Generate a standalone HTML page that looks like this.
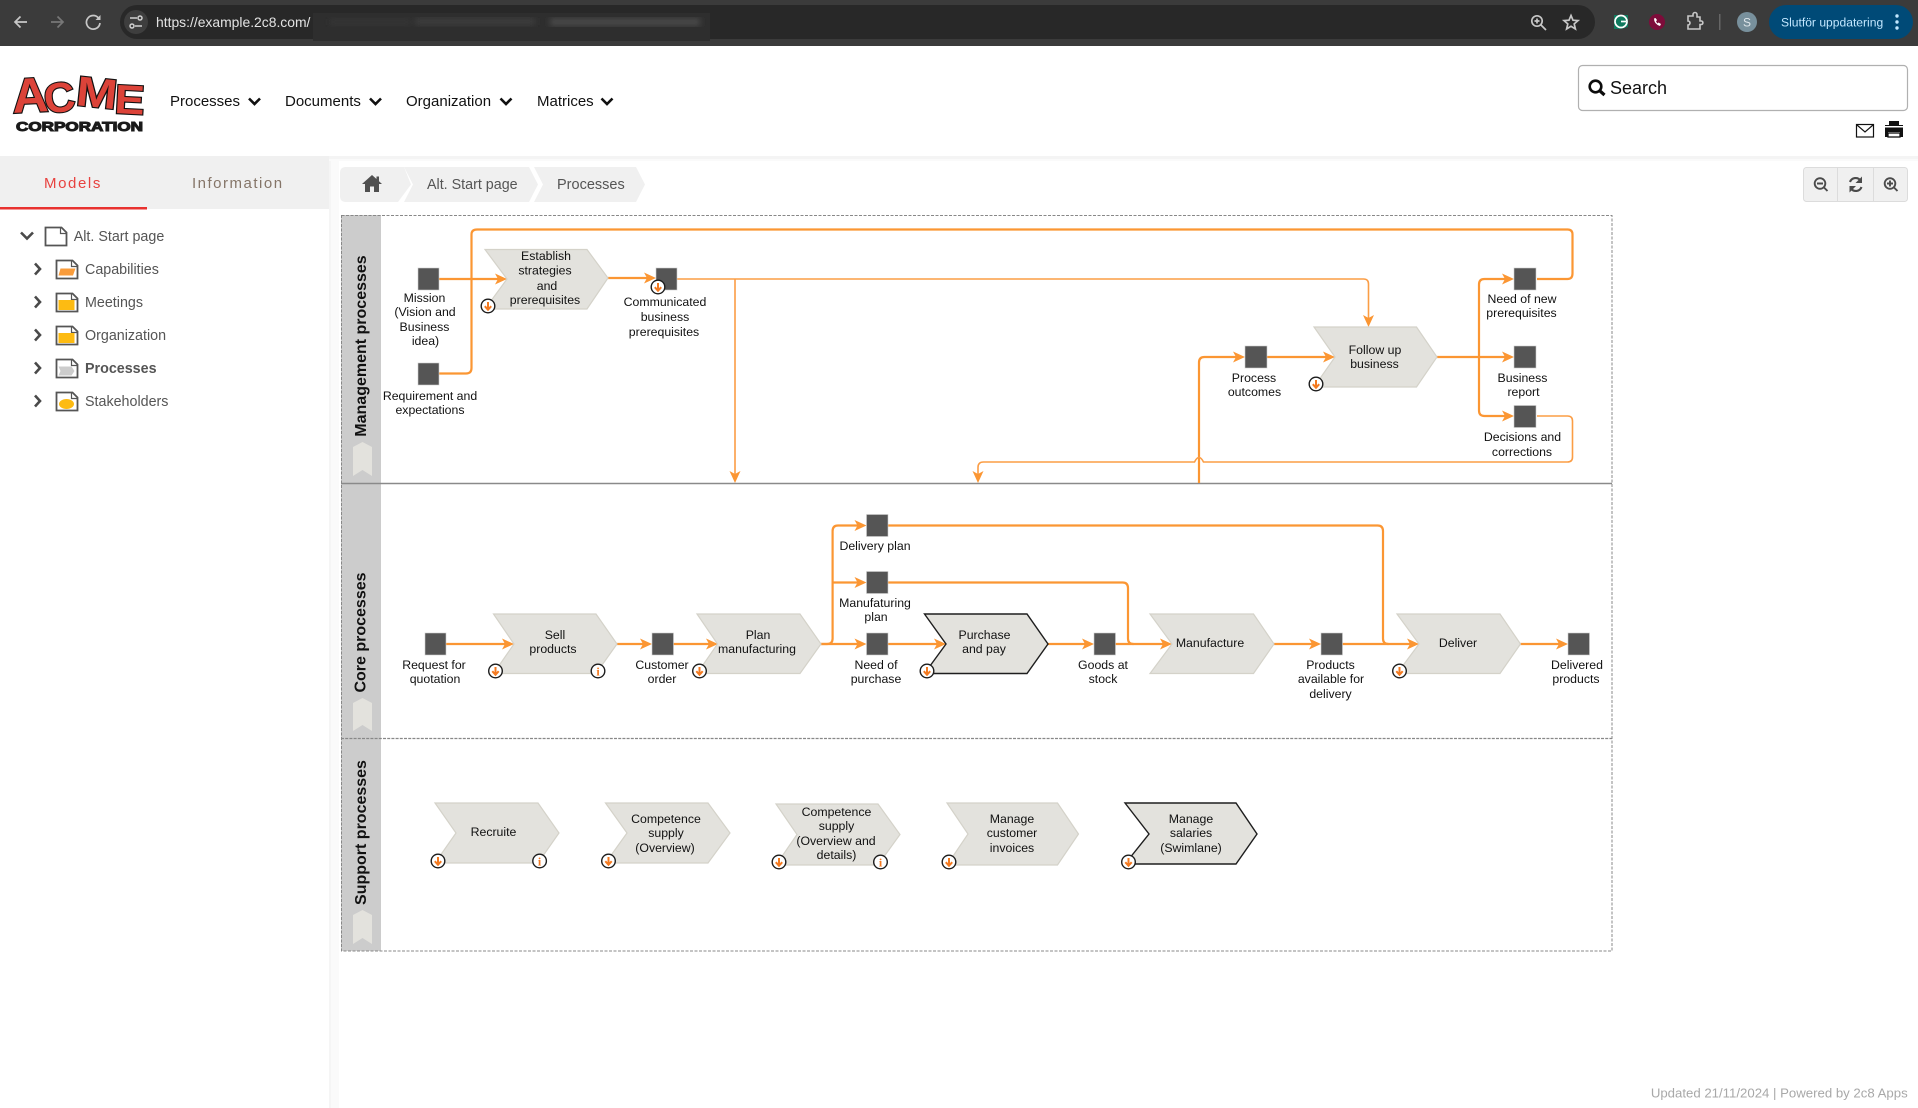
<!DOCTYPE html>
<html><head><meta charset="utf-8"><title>Processes</title>
<style>
html,body{margin:0;padding:0;background:#fff;width:1918px;height:1108px;overflow:hidden}
svg{display:block;font-family:"Liberation Sans",sans-serif}
.l text,.l{font-size:12.3px;fill:#111;text-anchor:middle}
.o{fill:none;stroke:#fb9633;stroke-width:2.2}
.t{fill:none;stroke:#fb9d45;stroke-width:1.6}
.c{fill:#e3e2dd;stroke:#d4d2c9;stroke-width:1.2}
.k{fill:#e3e2dd;stroke:#1e1e1e;stroke-width:1.4}
.b{fill:#555;stroke:#ccc;stroke-width:.6}
.nav{font-size:15px;fill:#111}
.tree{font-size:14.3px;fill:#555}
</style></head><body>
<svg width="1918" height="1108" viewBox="0 0 1918 1108" xmlns="http://www.w3.org/2000/svg">
<defs>
<path id="ar" d="M0 0L-12-5.500L-9 0L-12 5.500Z" fill="#fb9633"/>
<path id="ad" d="M0 0L-5.500-12L0-9L5.500-12Z" fill="#fb9633"/>
<g id="cd"><circle r="6.800" fill="#fff" stroke="#1c1c1c" stroke-width="1.400"/><path d="M0-4V2.500M-3.200 .2L0 3.800L3.200 .2" fill="none" stroke="#f47a20" stroke-width="2"/></g>
<circle id="ci" r="6.800" fill="#fff" stroke="#1c1c1c" stroke-width="1.400"/>
<path id="doc" d="M1 1H17L22 6V19H1Z" fill="#fff" stroke="#555" stroke-width="1.800"/>
<path id="fold" d="M16 1V7H22" fill="none" stroke="#555" stroke-width="1.200"/>
<path id="cr" d="M0 0L5 5.500L0 11" fill="none" stroke="#4a4a4a" stroke-width="2.600"/>
<filter id="bl"><feGaussianBlur stdDeviation="3"/></filter>
</defs>

<!-- browser chrome -->
<rect x="0" y="0" width="1918" height="46" fill="#3b3b3b"/>
<g fill="none" stroke="#c7c7c7" stroke-width="1.700">
<path d="M27 22H15M20.500 16.500L15 22L20.500 27.500"/>
<path d="M51 22H63M57.500 16.500L63 22L57.500 27.500" stroke="#777"/>
<path d="M98.500 18A6.800 6.800 0 1 0 100 23"/>
</g>
<path d="M100.500 15V20H95.500Z" fill="#c7c7c7"/>
<rect x="120" y="5" width="1475" height="34" rx="17" fill="#282828"/>
<circle cx="136" cy="22" r="12" fill="#3e3e3e"/>
<g fill="none" stroke="#d0d0d0" stroke-width="1.500"><path d="M130 18H137M135 26H142"/><circle cx="140" cy="18" r="2"/><circle cx="132" cy="26" r="2"/></g>
<text x="156" y="27" font-size="13.900" fill="#e3e3e3">https://example.2c8.com/</text>
<rect x="313" y="13" width="397" height="28" fill="#2e2e2e"/>
<g filter="url(#bl)"><rect x="330" y="19" width="80" height="6" fill="#343434"/><rect x="415" y="18" width="120" height="7" fill="#3e3e3e"/><rect x="550" y="18" width="150" height="8" fill="#484848"/></g>
<g fill="none" stroke="#c7c7c7" stroke-width="1.700">
<circle cx="1537" cy="21" r="5.200"/><path d="M1541 25L1546 30M1534.500 21H1539.500M1537 18.500V23.500"/>
<path d="M1571 15.500L1573 20.200L1578 20.600L1574.200 23.900L1575.400 29L1571 26.300L1566.600 29L1567.800 23.900L1564 20.600L1569 20.200Z"/>
<path d="M1688 16H1693V14.500A2 2 0 0 1 1697 14.500V17H1700V21H1701.500A1.800 1.800 0 0 1 1701.500 24.500H1700V29H1688V25A2 2 0 0 0 1688 21Z" stroke-width="1.600"/>
</g>
<path d="M1614 15H1628V27L1621 29H1614Z" fill="#0f7a5e"/>
<circle cx="1621" cy="21.500" r="6" fill="none" stroke="#fff" stroke-width="1.700"/><path d="M1621 21.500H1626" stroke="#fff" stroke-width="1.700"/>
<circle cx="1657" cy="22" r="8" fill="#7d0c3a"/><path d="M1654 18.500Q1654 24 1660 26L1661 24L1658.500 22.500L1657.500 23.500L1656 21.500L1657 20L1655.500 18Z" fill="#fff"/>
<rect x="1719" y="14" width="1.500" height="16" fill="#666"/>
<circle cx="1747" cy="22" r="10" fill="#78909c"/>
<text x="1747" y="26.500" font-size="12" fill="#dfe6ea" text-anchor="middle">S</text>
<rect x="1769" y="5" width="144" height="34" rx="17" fill="#004a77"/>
<text x="1781" y="26.500" font-size="12.100" fill="#c2e7ff">Slutför uppdatering</text>
<g fill="#c2e7ff"><circle cx="1897" cy="16" r="1.700"/><circle cx="1897" cy="22" r="1.700"/><circle cx="1897" cy="28" r="1.700"/></g>

<!-- page shadows -->
<rect x="329" y="156" width="10" height="952" fill="#fafafa"/>
<rect x="329" y="156" width="2" height="952" fill="#f5f5f5"/>
<rect x="0" y="156" width="1918" height="3" fill="#f4f4f4"/>
<rect x="0" y="159" width="1918" height="2" fill="#fafafa"/>

<!-- logo -->
<g font-weight="bold" fill="#dc4339" stroke="#111" stroke-width="2.200" paint-order="stroke" font-family="Liberation Sans, sans-serif">
<text transform="translate(13 113) rotate(-3)" font-size="49" textLength="36" lengthAdjust="spacingAndGlyphs">A</text>
<text transform="translate(46 114) rotate(-8)" font-size="42" textLength="31" lengthAdjust="spacingAndGlyphs">C</text>
<text transform="translate(75 105) rotate(6)" font-size="42" textLength="41" lengthAdjust="spacingAndGlyphs">M</text>
<text transform="translate(114 113) rotate(3)" font-size="41" textLength="30" lengthAdjust="spacingAndGlyphs">E</text>
</g>
<text x="16" y="131" font-size="12.500" font-weight="bold" fill="#1a1a1a" stroke="#1a1a1a" stroke-width="1" textLength="127" lengthAdjust="spacingAndGlyphs">CORPORATION</text>

<!-- nav -->
<g class="nav"><text x="170" y="106">Processes</text><text x="285" y="106">Documents</text><text x="406" y="106">Organization</text><text x="537" y="106">Matrices</text></g>
<g fill="none" stroke="#111" stroke-width="2.600"><path d="M249 98.500L254.500 104L260 98.500M370 98.500L375.500 104L381 98.500M500.500 98.500L506 104L511.500 98.500M601.500 98.500L607 104L612.500 98.500"/></g>

<!-- search -->
<rect x="1578.500" y="65.500" width="329" height="45" rx="4" fill="#fff" stroke="#b0b0b0" stroke-width="1.200"/>
<circle cx="1595.500" cy="86.500" r="5.800" fill="none" stroke="#0c0c0c" stroke-width="2.600"/><path d="M1600 91L1604.500 95" stroke="#0c0c0c" stroke-width="3.200"/>
<text x="1610" y="94" font-size="18" fill="#111">Search</text>
<rect x="1856.500" y="124.500" width="17" height="12.500" fill="#fff" stroke="#111" stroke-width="1.200"/><path d="M1857 125L1865 132L1873 125" fill="none" stroke="#111" stroke-width="1.200"/>
<path d="M1889 121H1899V125H1903V137H1900V132H1888V137H1885V125H1889Z" fill="#111"/><rect x="1888" y="133" width="12" height="4" fill="none" stroke="#111" stroke-width="1.300"/><rect x="1885" y="126" width="18" height="1.500" fill="#fff"/>

<!-- tabs -->
<rect x="0" y="156" width="329" height="53" fill="#f0f0f0"/>
<rect x="0" y="207" width="147" height="2.500" fill="#e8322f"/>
<text x="44" y="188" font-size="15" fill="#e8423f" letter-spacing="1.600">Models</text>
<text x="192" y="188" font-size="15" fill="#857568" letter-spacing="1.500">Information</text>

<!-- breadcrumb -->
<path d="M346 167H404L411 184.500L398 202H346Q340 202 340 196V173Q340 167 346 167Z" fill="#f0f0f0"/>
<path d="M404 167H529L538 184.500L529 202H404L413 184.500Z" fill="#f0f0f0"/>
<path d="M534 167H636L645 184.500L636 202H534L543 184.500Z" fill="#f0f0f0"/>
<path d="M372 175L362 184H365V192H370V186.500H374V192H379V184H382L379 181.300V176.500H376.500V179Z" fill="#505050"/>
<text x="427" y="189" font-size="14.300" fill="#555">Alt. Start page</text>
<text x="557" y="189" font-size="14.500" fill="#555">Processes</text>

<!-- zoom bar -->
<rect x="1803.500" y="167.500" width="104" height="34" rx="3" fill="#f0f0f0" stroke="#dcdcdc"/>
<path d="M1837.500 167.500V201.500M1873.500 167.500V201.500" stroke="#dcdcdc"/>
<g fill="none" stroke="#4b4b4b" stroke-width="1.900"><circle cx="1820" cy="183.500" r="5.300"/><path d="M1824 187.500L1827.500 191M1817 183.500H1823"/>
<circle cx="1890" cy="183.500" r="5.300"/><path d="M1894 187.500L1897.500 191M1887 183.500H1893M1890 180.500V186.500"/>
<path d="M1850 182A6 6 0 0 1 1860.500 180.500M1861.500 187A6 6 0 0 1 1851 188.500" stroke-width="2.100"/></g>
<path d="M1862 176.500V183H1855.500ZM1849.500 192.500V186H1856Z" fill="#4b4b4b"/>

<!-- tree -->
<path d="M21 232.500L27 238.500L33 232.500" fill="none" stroke="#4a4a4a" stroke-width="2.600"/>
<g transform="translate(44.500 226.500)"><use href="#doc"/><use href="#fold"/></g>
<text x="73.700" y="241" class="tree">Alt. Start page</text>
<g><use href="#cr" x="35" y="263.500"/><use href="#cr" x="35" y="296.500"/><use href="#cr" x="35" y="329.500"/><use href="#cr" x="35" y="362.500"/><use href="#cr" x="35" y="395.500"/></g>
<g transform="translate(55.500 259.500)"><use href="#doc"/><use href="#fold"/><path d="M5 9H20L17.500 16H3Z" fill="#f99c3b"/></g>
<g transform="translate(55.500 292.500)"><use href="#doc"/><use href="#fold"/><rect x="3" y="7.500" width="16" height="10" fill="#fdbb12"/></g>
<g transform="translate(55.500 325.500)"><use href="#doc"/><use href="#fold"/><rect x="3" y="7.500" width="16" height="10" fill="#fdbb12"/></g>
<g transform="translate(55.500 358.500)"><use href="#doc"/><use href="#fold"/><path d="M3 8H16L19 12.500L16 17H3L5 12.500Z" fill="#ccc"/></g>
<g transform="translate(55.500 391.500)"><use href="#doc"/><use href="#fold"/><ellipse cx="11" cy="12.500" rx="7.500" ry="5" fill="#fdbb12"/></g>
<g class="tree"><text x="85" y="274">Capabilities</text><text x="85" y="307">Meetings</text><text x="85" y="340">Organization</text><text x="85" y="373" font-weight="bold">Processes</text><text x="85" y="406">Stakeholders</text></g>

<!-- swimlanes -->
<rect x="341" y="215" width="40" height="736" fill="#ccc"/>
<rect x="341.500" y="215.500" width="1270.500" height="735.500" fill="none" stroke="#888" stroke-width="1" stroke-dasharray="3 1.500"/>
<path d="M341 483.500H1612" stroke="#8a8a8a" stroke-width="1.600"/>
<path d="M341 738.500H1612" stroke="#888" stroke-width="1.200" stroke-dasharray="3 1.200"/>
<g font-size="16" font-weight="bold" fill="#111" text-anchor="middle">
<text transform="translate(366 346) rotate(-90)">Management processes</text>
<text transform="translate(365.500 632.500) rotate(-90)">Core processes</text>
<text transform="translate(366 832.500) rotate(-90)">Support processes</text></g>
<g fill="#e3e2dd">
<path d="M353 447L362.500 442L372 447V476L362.500 470L353 476Z"/>
<path d="M353 703L362.500 698L372 703V731L362.500 725L353 731Z"/>
<path d="M353 915L362.500 910L372 915V944L362.500 938L353 944Z"/></g>

<!-- connectors -->
<path class="o" d="M439 279H500"/>
<path class="o" d="M439 373.500H466Q471.500 373.500 471.500 368V234.500Q471.500 229.500 477 229.500H1567.500Q1572.500 229.500 1572.500 234.500V273.500Q1572.500 279 1567.500 279H1537"/>
<path class="o" d="M608 278H650"/>
<path class="t" d="M677 279H1363.500Q1368.500 279 1368.500 284V320"/>
<path class="t" d="M735 279V476"/>
<path class="o" d="M1267 357H1329"/>
<path class="o" d="M1199 483V362.500Q1199 357 1204.500 357H1239"/>
<path class="o" d="M1437 357H1508"/>
<path class="o" d="M1508 279H1484.500Q1479 279 1479 284.500V410.500Q1479 416 1484.500 416H1508"/>
<path class="t" d="M1537 416H1567.500Q1572.500 416 1572.500 421V457Q1572.500 462 1567.500 462H1203.500Q1199 453 1194.500 462H983.500Q978 462 978 467.500V476"/>
<use href="#ar" x="507" y="279"/><use href="#ar" x="656" y="278"/><use href="#ad" x="1368.500" y="327"/><use href="#ad" x="735" y="483"/>
<use href="#ar" x="1335" y="357"/><use href="#ar" x="1245" y="357"/><use href="#ar" x="1514" y="279"/><use href="#ar" x="1514" y="357"/><use href="#ar" x="1514" y="416"/><use href="#ad" x="978" y="483"/>

<path class="o" d="M446 644H508M617 644H646M673.500 644H712M821 644H860"/>
<path class="o" d="M821 644H827Q832.600 644 832.600 638.500V531Q832.600 525.500 838 525.500H860M832.600 582.500H860"/>
<path class="o" d="M888 525.500H1377.500Q1383 525.500 1383 531V638.500Q1383 644 1388.500 644"/>
<path class="o" d="M888 582.500H1122.500Q1128 582.500 1128 588V638.500Q1128 644 1133.500 644"/>
<path class="o" d="M888 644H940M1048 644H1088M1115.500 644H1166M1274 644H1315M1342.500 644H1413M1520 644H1562"/>
<use href="#ar" x="514" y="644"/><use href="#ar" x="652" y="644"/><use href="#ar" x="718" y="644"/><use href="#ar" x="866.500" y="644"/><use href="#ar" x="866.500" y="525.500"/><use href="#ar" x="866.500" y="582.500"/><use href="#ar" x="946" y="644"/><use href="#ar" x="1094" y="644"/><use href="#ar" x="1172" y="644"/><use href="#ar" x="1321" y="644"/><use href="#ar" x="1419" y="644"/><use href="#ar" x="1568" y="644"/>

<!-- boxes -->
<g class="b">
<rect x="418" y="268" width="21" height="22"/><rect x="418" y="363" width="21" height="22"/><rect x="656" y="268" width="21" height="22"/>
<rect x="1245" y="346" width="22" height="22"/><rect x="1514" y="268" width="22" height="22"/><rect x="1514" y="346" width="22" height="22"/><rect x="1514" y="405.500" width="22" height="22"/>
<rect x="866.500" y="514.500" width="21.500" height="22"/><rect x="866.500" y="571.500" width="21.500" height="22"/><rect x="866.500" y="633" width="21.500" height="22"/>
<rect x="425" y="633" width="21" height="22"/><rect x="652" y="633" width="21.500" height="22"/><rect x="1094" y="633" width="21.500" height="22"/><rect x="1321" y="633" width="21.500" height="22"/><rect x="1568" y="633" width="21.500" height="22"/>
</g>

<!-- chevrons -->
<path class="c" d="M485 249.500H587L608 278L587 309H485L507 279Z"/>
<path class="c" d="M1314 327H1416.500L1437 357L1416.500 387H1314L1335 357Z"/>
<path class="c" d="M493.500 614H596L617 644L596 673.500H493.500L514 644Z"/>
<path class="c" d="M697 614H800L821 644L800 673.500H697L717.500 644Z"/>
<path class="k" d="M924.500 614H1027L1048 644L1027 673.500H924.500L946 644Z"/>
<path class="c" d="M1150 614H1253.500L1274 644L1253.500 673.500H1150L1172 644Z"/>
<path class="c" d="M1397 614H1500L1520.500 644L1500 673.500H1397L1419 644Z"/>
<path class="c" d="M435 803H538L559 833L538 863H435L456 833Z"/>
<path class="c" d="M605.500 803H708L730 833L708 863H605.500L627 833Z"/>
<path class="c" d="M776 804H878L900 834.500L878 865H776L797 834.500Z"/>
<path class="c" d="M947 803H1057.500L1078.500 834L1057.500 865H947L968 834Z"/>
<path class="k" d="M1125 803H1236L1257 834L1236 864H1125L1149 834Z"/>

<!-- labels -->
<g class="l">
<text x="546" y="260">Establish</text><text x="545" y="274.500">strategies</text><text x="547" y="290">and</text><text x="545" y="304">prerequisites</text>
<text x="424.500" y="302">Mission</text><text x="425" y="316">(Vision and</text><text x="424.500" y="331">Business</text><text x="425.500" y="345">idea)</text>
<text x="430" y="400">Requirement and</text><text x="430" y="414">expectations</text>
<text x="665" y="306">Communicated</text><text x="665" y="321">business</text><text x="664" y="336">prerequisites</text>
<text x="1522" y="303">Need of new</text><text x="1521.500" y="317">prerequisites</text>
<text x="1375" y="354">Follow up</text><text x="1374.500" y="368">business</text>
<text x="1254" y="382">Process</text><text x="1254.500" y="396">outcomes</text>
<text x="1522.500" y="382">Business</text><text x="1523.500" y="396">report</text>
<text x="1522.500" y="441">Decisions and</text><text x="1522" y="456">corrections</text>
<text x="875" y="550">Delivery plan</text>
<text x="875" y="607">Manufaturing</text><text x="876" y="621">plan</text>
<text x="876" y="669">Need of</text><text x="876" y="683">purchase</text>
<text x="434" y="669">Request for</text><text x="435" y="683">quotation</text>
<text x="662" y="669">Customer</text><text x="662" y="683">order</text>
<text x="555" y="639">Sell</text><text x="553" y="653">products</text>
<text x="758" y="639">Plan</text><text x="757" y="653">manufacturing</text>
<text x="984.500" y="639">Purchase</text><text x="984" y="653">and pay</text>
<text x="1103" y="669">Goods at</text><text x="1103" y="683">stock</text>
<text x="1210" y="647">Manufacture</text>
<text x="1330.500" y="669">Products</text><text x="1331" y="683">available for</text><text x="1330.500" y="698">delivery</text>
<text x="1458" y="647">Deliver</text>
<text x="1577" y="669">Delivered</text><text x="1576" y="683">products</text>
<text x="493.500" y="836">Recruite</text>
<text x="666" y="823">Competence</text><text x="666" y="837">supply</text><text x="665" y="852">(Overview)</text>
<text x="836.500" y="816">Competence</text><text x="836.500" y="830">supply</text><text x="836" y="845">(Overview and</text><text x="836.500" y="859">details)</text>
<text x="1012" y="823">Manage</text><text x="1012" y="837">customer</text><text x="1012" y="852">invoices</text>
<text x="1191" y="823">Manage</text><text x="1191" y="837">salaries</text><text x="1191" y="852">(Swimlane)</text>
</g>

<!-- circle badges -->
<use href="#cd" x="488" y="306"/><use href="#cd" x="658" y="287"/><use href="#cd" x="1316" y="384"/>
<use href="#cd" x="495.500" y="671"/><use href="#cd" x="699.500" y="671"/><use href="#cd" x="927" y="671"/><use href="#cd" x="1399.500" y="671"/>
<use href="#cd" x="438" y="861"/><use href="#cd" x="608.500" y="861"/><use href="#cd" x="779" y="862"/><use href="#cd" x="949" y="862"/><use href="#cd" x="1128.500" y="862"/>
<use href="#ci" x="598" y="671"/><use href="#ci" x="539.600" y="861"/><use href="#ci" x="880.500" y="862"/>
<g font-size="12" font-weight="bold" fill="#f47a20" text-anchor="middle" font-family="Liberation Serif, serif">
<text x="598" y="675.500">i</text><text x="539.600" y="865.500">i</text><text x="880.500" y="866.500">i</text></g>

<text x="1907.700" y="1097.500" font-size="13.200" fill="#a8a8a8" text-anchor="end">Updated 21/11/2024 | Powered by 2c8 Apps</text>
</svg>
</body></html>
